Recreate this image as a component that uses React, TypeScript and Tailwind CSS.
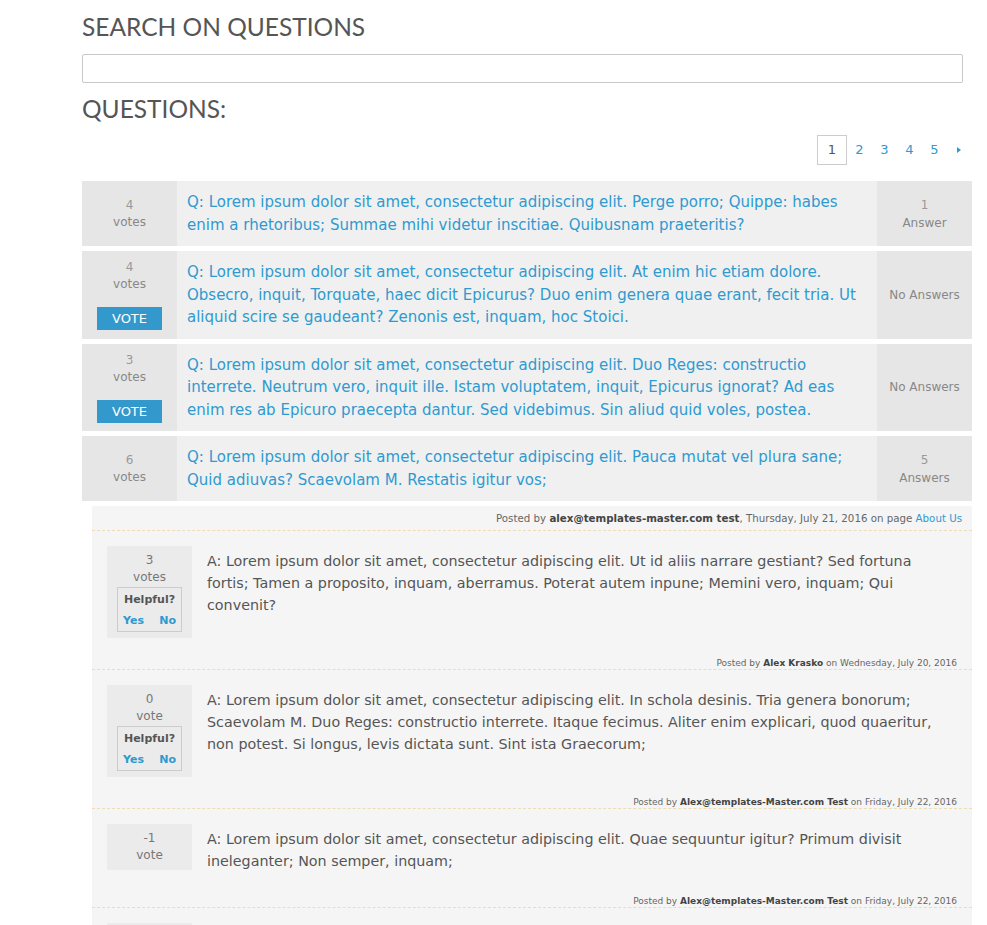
const questions = [
  {
    votes: 4,
    vote: false,
    text: "Q: Lorem ipsum dolor sit amet, consectetur adipiscing elit. Perge porro; Quippe: habes enim a rhetoribus; Summae mihi videtur inscitiae. Quibusnam praeteritis?",
    answers: "1",
    label: "Answer",
  },
  {
    votes: 4,
    vote: true,
    text: "Q: Lorem ipsum dolor sit amet, consectetur adipiscing elit. At enim hic etiam dolore. Obsecro, inquit, Torquate, haec dicit Epicurus? Duo enim genera quae erant, fecit tria. Ut aliquid scire se gaudeant? Zenonis est, inquam, hoc Stoici.",
    answers: "",
    label: "No Answers",
  },
  {
    votes: 3,
    vote: true,
    text: "Q: Lorem ipsum dolor sit amet, consectetur adipiscing elit. Duo Reges: constructio interrete. Neutrum vero, inquit ille. Istam voluptatem, inquit, Epicurus ignorat? Ad eas enim res ab Epicuro praecepta dantur. Sed videbimus. Sin aliud quid voles, postea.",
    answers: "",
    label: "No Answers",
  },
  {
    votes: 6,
    vote: false,
    text: "Q: Lorem ipsum dolor sit amet, consectetur adipiscing elit. Pauca mutat vel plura sane; Quid adiuvas? Scaevolam M. Restatis igitur vos;",
    answers: "5",
    label: "Answers",
  },
];

const answers = [
  {
    votes: "3",
    unit: "votes",
    helpful: true,
    text: "A: Lorem ipsum dolor sit amet, consectetur adipiscing elit. Ut id aliis narrare gestiant? Sed fortuna fortis; Tamen a proposito, inquam, aberramus. Poterat autem inpune; Memini vero, inquam; Qui convenit?",
    author: "Alex Krasko",
    date: "Wednesday, July 20, 2016",
  },
  {
    votes: "0",
    unit: "vote",
    helpful: true,
    text: "A: Lorem ipsum dolor sit amet, consectetur adipiscing elit. In schola desinis. Tria genera bonorum; Scaevolam M. Duo Reges: constructio interrete. Itaque fecimus. Aliter enim explicari, quod quaeritur, non potest. Si longus, levis dictata sunt. Sint ista Graecorum;",
    author: "Alex@templates-Master.com Test",
    date: "Friday, July 22, 2016",
  },
  {
    votes: "-1",
    unit: "vote",
    helpful: false,
    text: "A: Lorem ipsum dolor sit amet, consectetur adipiscing elit. Quae sequuntur igitur? Primum divisit ineleganter; Non semper, inquam;",
    author: "Alex@templates-Master.com Test",
    date: "Friday, July 22, 2016",
  },
  {
    votes: "1",
    unit: "vote",
    helpful: true,
    text: "A: Lorem ipsum dolor sit amet, consectetur adipiscing elit. Quid ergo aliud intellegetur nisi uti ne quae pars naturae neglegatur?",
    author: "Alex Krasko",
    date: "Friday, July 22, 2016",
  },
];

const body = { fontFamily: '"DejaVu Sans", Verdana, sans-serif' };
const head = { fontFamily: 'Lato, "Open Sans", sans-serif' };

export default function App() {
  return (
    <div className="min-h-screen bg-white pl-[82px] pr-[15px]" style={body}>
      <h2 className="pt-[13px] text-[24.5px] leading-[28px] font-normal uppercase text-[#555]" style={head}>
        Search on questions
      </h2>
      <input className="mt-[13px] block w-[881px] h-[29px] border border-[#c8c8c8] rounded-[2px] bg-white" />
      <h2 className="mt-[12px] text-[24.5px] leading-[28px] font-normal uppercase text-[#555]" style={head}>
        Questions:
      </h2>

      <div className="mt-[12px] flex justify-end items-center text-[13px]">
        <span className="w-[30px] h-[30px] flex items-center justify-center border border-[#ccc] text-[#555]">1</span>
        {[2, 3, 4, 5].map((n) => (
          <span key={n} className="w-[25px] text-center text-[#2e9ad0]">{n}</span>
        ))}
        <svg width="25" height="10" viewBox="0 0 25 10" className="text-[#2e9ad0]">
          <path d="M10 2 L14 5 L10 8 Z" fill="currentColor" />
        </svg>
      </div>

      <div className="mt-[16px] flex flex-col gap-[5px]">
        {questions.map((q, i) => (
          <div key={i} className="flex bg-[#f0f0f0]">
            <div className="w-[95px] shrink-0 bg-[#e6e6e6] flex flex-col items-center justify-center text-[12px] leading-[17px] text-[#999]">
              <span>{q.votes}</span>
              <span className="text-[#888]">votes</span>
              {q.vote && (
                <button className="mt-[14px] w-[65px] h-[23px] bg-[#3399cc] text-white text-[13px]">VOTE</button>
              )}
            </div>
            <p className="flex-1 px-[10px] py-[10px] text-[15px] leading-[22.5px] text-[#2e9ad0]">{q.text}</p>
            <div className="w-[95px] shrink-0 bg-[#e6e6e6] flex flex-col items-center justify-center text-[12px] leading-[18px] text-[#999]">
              {q.answers && <span>{q.answers}</span>}
              <span className="text-[#888]">{q.label}</span>
            </div>
          </div>
        ))}
      </div>

      <div className="ml-[10px] mt-[5px] bg-[#f5f5f5]">
        <div className="pt-[5px] pb-[5px] pr-[10px] text-right text-[10.25px] leading-[14px] text-[#666] border-b border-dashed border-[#f0dcb4]">
          Posted by <b className="text-[#444]">alex@templates-master.com test</b>, Thursday, July 21, 2016 on page{" "}
          <span className="text-[#2e9ad0]">About Us</span>
        </div>
        {answers.map((a, i) => (
          <div key={i}>
            <div className="flex items-start pt-[15px] pl-[15px] pr-[20px]">
              <div className="w-[85px] shrink-0 bg-[#ebebeb] flex flex-col items-center pt-[6px] pb-[6px] text-[12px] leading-[17px] text-[#777]">
                <span>{a.votes}</span>
                <span>{a.unit}</span>
                {a.helpful && (
                  <div className="mt-[1px] w-[65px] border border-[#ccc] flex flex-col items-center pt-[5px] pb-[3px] text-[11px] leading-[14px] font-bold">
                    <span className="text-[#555]">Helpful?</span>
                    <span className="mt-[7px] flex w-full justify-between px-[5px] text-[#2e9ad0]">
                      <span>Yes</span>
                      <span>No</span>
                    </span>
                  </div>
                )}
              </div>
              <p className="flex-1 pl-[15px] pt-[4px] pb-[4px] text-[14.3px] leading-[22px] text-[#555]">{a.text}</p>
            </div>
            <div className="mt-[19px] pr-[15px] text-right text-[9px] leading-[12px] text-[#666] border-b border-dashed border-[#f0dcb4]">
              Posted by <b className="text-[#444]">{a.author}</b> on {a.date}
            </div>
          </div>
        ))}
      </div>
    </div>
  );
}
